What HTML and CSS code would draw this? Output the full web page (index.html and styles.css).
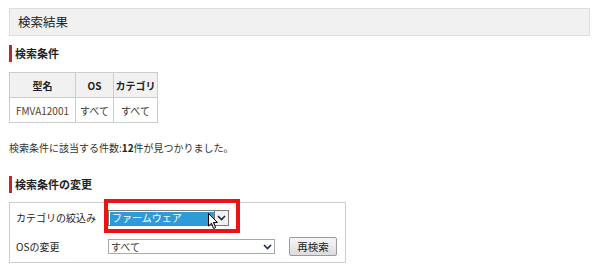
FILE: index.html
```html
<!DOCTYPE html>
<html lang="ja">
<head>
    <meta charset="UTF-8">
    <title>検索結果</title>
    <link rel="stylesheet" href="styles.css">
</head>
<body>
    <div class="page">
        <h1 class="page-title">検索結果</h1>

        <h2 class="section-title">検索条件</h2>
        <table class="cond-table">
            <tr>
                <th class="col-model">型名</th>
                <th class="col-os">OS</th>
                <th class="col-cat">カテゴリ</th>
            </tr>
            <tr>
                <td class="model">FMVA12001</td>
                <td>すべて</td>
                <td>すべて</td>
            </tr>
        </table>

        <p class="result-count">検索条件に該当する件数:<b>12</b>件が見つかりました。</p>

        <h2 class="section-title">検索条件の変更</h2>
        <div class="change-box">
            <div class="form-row row-cat">
                <span class="form-label">カテゴリの絞込み</span>
                <div class="select select-cat">
                    <span class="select-value selected">ファームウェア</span>
                    <span class="select-arrow boxed">
                        <svg width="9" height="6" viewBox="0 0 9 6"><path d="M1 1 L4.5 4.5 L8 1" fill="none" stroke="#1c2a4a" stroke-width="1.6"/></svg>
                    </span>
                </div>
                <!-- annotation frame and mouse cursor -->
                <div class="highlight"></div>
                <svg class="cursor" width="11" height="17" viewBox="0 0 11 17">
                    <path d="M0.5 0.5 L0.5 13 L3.5 10.2 L5.6 15.5 L7.6 14.6 L5.5 9.5 L9.5 9.5 Z" fill="#fff" stroke="#000" stroke-width="1"/>
                </svg>
            </div>
            <div class="form-row row-os">
                <span class="form-label">OSの変更</span>
                <div class="select select-os">
                    <span class="select-value">すべて</span>
                    <span class="select-arrow">
                        <svg width="9" height="6" viewBox="0 0 9 6"><path d="M1 1 L4.5 4.5 L8 1" fill="none" stroke="#1c2a4a" stroke-width="1.6"/></svg>
                    </span>
                </div>
                <button class="search-btn">再検索</button>
            </div>
        </div>
    </div>
</body>
</html>
```

FILE: styles.css
```css
:root {
    --accent: #c1272d;
    --border: #cccccc;
    --head-bg: #f1f1f1;
    --text: #333333;
}

* {
    margin: 0;
    padding: 0;
    box-sizing: border-box;
}

body {
    font-family: "Noto Sans CJK JP", "Noto Sans", sans-serif;
    font-size: 10px;
    color: var(--text);
    background: #ffffff;
}

.page {
    padding: 8px 10px 0 9px;
}

.page-title {
    height: 28px;
    border: 1px solid #dddddd;
    background: var(--head-bg);
    font-size: 12.5px;
    font-weight: normal;
    line-height: 26px;
    padding-left: 8px;
    color: #222;
}

.section-title {
    margin-top: 9px;
    height: 17px;
    border-left: 3px solid var(--accent);
    padding-left: 3px;
    font-size: 11px;
    font-weight: bold;
    line-height: 17px;
    color: #222;
}

.cond-table {
    margin-top: 10px;
    border-collapse: collapse;
    table-layout: fixed;
}

.cond-table th,
.cond-table td {
    border: 1px solid var(--border);
    height: 25px;
    padding: 0;
    text-align: center;
    white-space: nowrap;
    font-size: 10px;
}

.cond-table th {
    background: var(--head-bg);
    font-weight: bold;
    color: #222;
}

.col-model { width: 66px; }
.col-os { width: 38px; }
.col-cat { width: 44px; }

.cond-table td.model {
    color: #5a3d1c;
}

.result-count {
    margin-top: 17px;
    line-height: 16px;
}

.result-count b {
    color: #222;
}

.result-count + .section-title {
    margin-top: 20px;
}

.change-box {
    margin-top: 9px;
    width: 337px;
    height: 61px;
    border: 1px solid var(--border);
    padding: 7px 0 0 6px;
}

.form-row {
    display: flex;
    align-items: center;
    position: relative;
}

.form-label {
    width: 92px;
    line-height: 16px;
    color: #222;
}

.row-cat {
    height: 16px;
}

.row-os {
    margin-top: 11px;
    height: 19px;
}

.select {
    display: flex;
    height: 16px;
    border: 1px solid #7a7a7a;
    background: #fff;
}

.select-cat {
    width: 121px;
}

.select-os {
    width: 167px;
    height: 15px;
    border-color: #a9a9a9;
}

.select-value {
    flex: 1;
    line-height: 13px;
    padding-left: 2px;
}

.select-value.selected {
    background: #2e9bd8;
    color: #ffffff;
    margin: 1px 0 0 1px;
    line-height: 12px;
}

.select-arrow {
    width: 14px;
    display: flex;
    align-items: center;
    justify-content: center;
}

.select-arrow.boxed {
    border-left: 1px solid #7a7a7a;
    background: #f2f2f2;
}

.search-btn {
    margin-left: 14px;
    width: 48px;
    height: 19px;
    border: 1px solid #9a9a9a;
    border-radius: 2px;
    background: linear-gradient(#f6f6f6, #dcdcdc);
    font-family: inherit;
    font-size: 10.5px;
    color: #222;
}

.highlight {
    position: absolute;
    left: 88px;
    top: -11px;
    width: 136px;
    height: 34px;
    border: 4px solid #ee1111;
}

.cursor {
    position: absolute;
    left: 192px;
    top: 3px;
}
```
